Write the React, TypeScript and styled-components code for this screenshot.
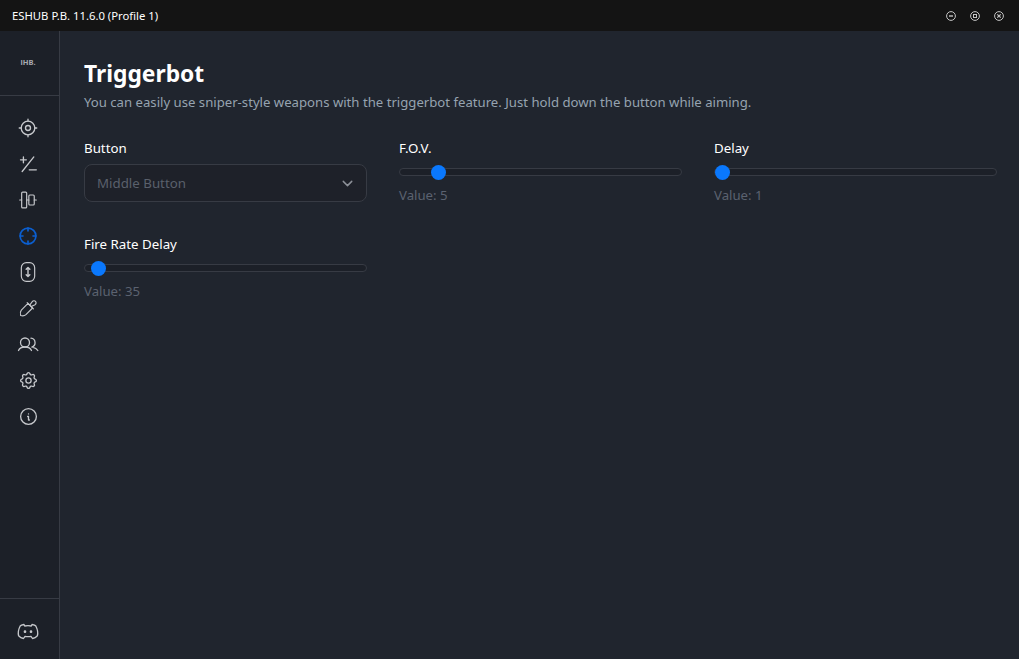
import React from "react";
import styled, { createGlobalStyle } from "styled-components";
import { TbChevronDown, TbInfoCircle, TbSettings } from "react-icons/tb";

const Global = createGlobalStyle`
  html, body { margin: 0; padding: 0; height: 100%; background: #20252e; }
  #root { height: 100%; }
  * { box-sizing: border-box; }
`;

const Shell = styled.div`
  width: 1019px;
  height: 659px;
  display: flex;
  flex-direction: column;
  overflow: hidden;
  font-family: "Noto Sans", "Open Sans", sans-serif;
  background: #20252e;
`;

const TitleBar = styled.header`
  height: 31px;
  flex: none;
  display: flex;
  align-items: center;
  justify-content: space-between;
  padding: 0 15px 0 12px;
  background: #141414;
`;

const TitleText = styled.span`
  font-size: 11.3px;
  color: #ffffff;
`;

const WindowButtons = styled.div`
  display: flex;
  gap: 14px;
  align-items: center;
`;

const WinButton = styled.svg`
  width: 10px;
  height: 10px;
  color: #c4c4c4;
  display: block;
`;

const Body = styled.div`
  flex: 1;
  min-height: 0;
  display: flex;
`;

const Sidebar = styled.nav`
  width: 60px;
  flex: none;
  display: flex;
  flex-direction: column;
  background: #1c2028;
  border-right: 1px solid #373b44;
`;

const LogoArea = styled.div`
  height: 65px;
  flex: none;
  display: flex;
  align-items: center;
  justify-content: center;
  padding-right: 3px;
  border-bottom: 1px solid #373b44;
`;

const LogoText = styled.span`
  font-size: 7.5px;
  line-height: 1;
  font-weight: 700;
  color: #a8aab2;
`;

const NavList = styled.div`
  flex: 1;
  display: flex;
  flex-direction: column;
  align-items: center;
  padding-top: 14px;
`;

const NavItem = styled.div<{ $active?: boolean }>`
  width: 59px;
  height: 36px;
  flex: none;
  display: flex;
  align-items: center;
  justify-content: center;
  padding-right: 3px;
  color: ${(p) => (p.$active ? "#0b5fd0" : "#c6c8cc")};
  svg { display: block; }
`;

const SidebarFooter = styled.div`
  height: 61px;
  flex: none;
  display: flex;
  align-items: center;
  justify-content: center;
  border-top: 1px solid #373b44;
  color: #c6c8cc;
  padding: 4px 3px 0 0;
`;

const Main = styled.main`
  flex: 1;
  min-width: 0;
  padding: 25px 22px 0 24px;
`;

const Title = styled.h1`
  margin: 0;
  font-size: 22.8px;
  line-height: 36px;
  font-weight: 700;
  color: #ffffff;
`;

const Subtitle = styled.p`
  margin: 0;
  font-size: 13.16px;
  line-height: 20px;
  color: #96a3b0;
`;

const FieldGrid = styled.div`
  margin-top: 26px;
  display: grid;
  grid-template-columns: repeat(3, 283px);
  column-gap: 32px;
  row-gap: 29px;
`;

const Field = styled.div`
  display: flex;
  flex-direction: column;
`;

const Label = styled.label`
  font-size: 13.3px;
  line-height: 20px;
  color: #ffffff;
`;

const Select = styled.div`
  margin-top: 6px;
  height: 38px;
  display: flex;
  align-items: center;
  justify-content: space-between;
  padding: 0 10px 0 12px;
  border: 1px solid #373b44;
  border-radius: 8px;
  background: #1e2129;
  font-size: 13.3px;
  color: #5a606c;
  svg { color: #8d9199; }
`;

const Track = styled.div`
  position: relative;
  margin-top: 10px;
  height: 8px;
  border: 1px solid #373b44;
  border-radius: 4px;
  background: #1c2028;
`;

const Thumb = styled.span`
  position: absolute;
  top: 50%;
  width: 15px;
  height: 15px;
  margin: -7.5px 0 0 -7.5px;
  border-radius: 50%;
  background: #0a78fd;
`;

const Value = styled.div`
  margin-top: 9px;
  font-size: 13.2px;
  line-height: 20px;
  color: #5b6270;
`;

const Stroke = (p: { children: React.ReactNode; size?: number; w?: number }) => (
  <svg width={p.size ?? 20} height={p.size ?? 20} viewBox="0 0 24 24" fill="none" stroke="currentColor" strokeWidth={p.w ?? 1.6} strokeLinecap="round" strokeLinejoin="round">
    {p.children}
  </svg>
);

const icons: React.ReactNode[] = [
  <Stroke key="aim" size={20}>
    <circle cx="12" cy="12" r="8.2" />
    <circle cx="12" cy="12" r="3" />
    <path d="M12 1.500v2.300M12 20.200v2.300M1.500 12h2.300M20.200 12h2.300" />
  </Stroke>,
  <Stroke key="pm">
    <path d="M3 7h7M6.500 3.500v7M19 3.500 5 21M13.500 19H22" />
  </Stroke>,
  <Stroke key="dist" w={1.4}>
    <rect x="4.400" y="2.500" width="6" height="19" rx="1.200" />
    <rect x="13" y="6" width="6.500" height="12" rx="1.200" />
    <path d="M2 12h2.400M10.400 12H13M19.500 12H22" />
  </Stroke>,
  <Stroke key="active" w={2}>
    <circle cx="12" cy="12" r="9.500" />
    <path d="M12 2.500V6M12 18v3.500M2.500 12H6M18 12h3.500" />
  </Stroke>,
  <Stroke key="mouse" w={1.4}>
    <rect x="4" y="0.800" width="16" height="22.400" rx="6" />
    <path d="M12 7v10M9.800 8.800 12 6.600l2.200 2.200M9.800 15.200 12 17.400l2.200-2.200" strokeWidth="1.700" />
  </Stroke>,
  <Stroke key="drop" w={1.4}>
    <path d="M12 6.500 17.500 12l-8 8c-1.500 1.300-4.500 1.500-6.300 1-.6-2-.4-5 .8-6.500z" />
    <path d="m11 5.500 7.500 7.500M14.500 8 17 4.500c1.300-1.500 3-1.500 4-.5s1 2.700-.5 4L16.500 10" />
  </Stroke>,
  <Stroke key="users" size={24} w={1.300}>
    <circle cx="9" cy="10.500" r="4.500" />
    <path d="M2.500 18.500c1-2.500 3.500-3.500 6.500-3.500s5.500 1 6.500 3.500" />
    <path d="M15 6.200a4.500 4.500 0 0 1 .8 8.800M17 15.300c2 .3 3.800 1.400 4.800 3.200" />
  </Stroke>,
  <TbSettings key="set" size={21} strokeWidth={1.5} />,
  <TbInfoCircle key="info" size={21} strokeWidth={1.5} />,
];

const DiscordIcon = () => (
  <Stroke size={24} w={1.300}>
    <path d="M8 5.500C6 5.800 4.700 6.300 4.200 7 2.600 10 1.800 13.500 2.600 16.800 4 18.300 5.800 19.200 7.500 19.500L9 17.300c2 .5 4 .5 6 0l1.500 2.200c1.700-.3 3.500-1.200 4.900-2.700.8-3.300 0-6.800-1.600-9.800-.5-.7-1.800-1.200-3.800-1.500L15.300 7c-2.300-.4-4.300-.4-6.600 0z" />
    <circle cx="9" cy="12.700" r=".7" fill="currentColor" />
    <circle cx="15" cy="12.700" r=".7" fill="currentColor" />
  </Stroke>
);

const SliderField = ({ label, value, pos }: { label: string; value: number; pos: number }) => (
  <Field>
    <Label>{label}</Label>
    <Track>
      <Thumb style={{ left: pos }} />
    </Track>
    <Value>Value: {value}</Value>
  </Field>
);

export default function App() {
  return (
    <Shell>
      <Global />
      <TitleBar>
        <TitleText>ESHUB P.B. 11.6.0 (Profile 1)</TitleText>
        <WindowButtons>
          <WinButton viewBox="0 0 10 10" fill="none" stroke="currentColor">
            <circle cx="5" cy="5" r="4.400" />
            <path d="M3 5h4" strokeWidth="1.400" />
          </WinButton>
          <WinButton viewBox="0 0 10 10" fill="none" stroke="currentColor">
            <circle cx="5" cy="5" r="4.400" />
            <rect x="3.500" y="3.500" width="3" height="3" />
          </WinButton>
          <WinButton viewBox="0 0 10 10" fill="none" stroke="currentColor">
            <circle cx="5" cy="5" r="4.400" />
            <path d="m3.300 3.300 3.400 3.400M6.700 3.300 3.300 6.700" strokeWidth="1.200" />
          </WinButton>
        </WindowButtons>
      </TitleBar>
      <Body>
        <Sidebar>
          <LogoArea>
            <LogoText>iHB.</LogoText>
          </LogoArea>
          <NavList>
            {icons.map((icon, i) => (
              <NavItem key={i} $active={i === 3}>
                {icon}
              </NavItem>
            ))}
          </NavList>
          <SidebarFooter>
            <DiscordIcon />
          </SidebarFooter>
        </Sidebar>
        <Main>
          <Title>Triggerbot</Title>
          <Subtitle>You can easily use sniper-style weapons with the triggerbot feature. Just hold down the button while aiming.</Subtitle>
          <FieldGrid>
            <Field>
              <Label>Button</Label>
              <Select>
                Middle Button
                <TbChevronDown size={17} />
              </Select>
            </Field>
            <SliderField label="F.O.V." value={5} pos={38.5} />
            <SliderField label="Delay" value={1} pos={7} />
            <SliderField label="Fire Rate Delay" value={35} pos={13.5} />
          </FieldGrid>
        </Main>
      </Body>
    </Shell>
  );
}
